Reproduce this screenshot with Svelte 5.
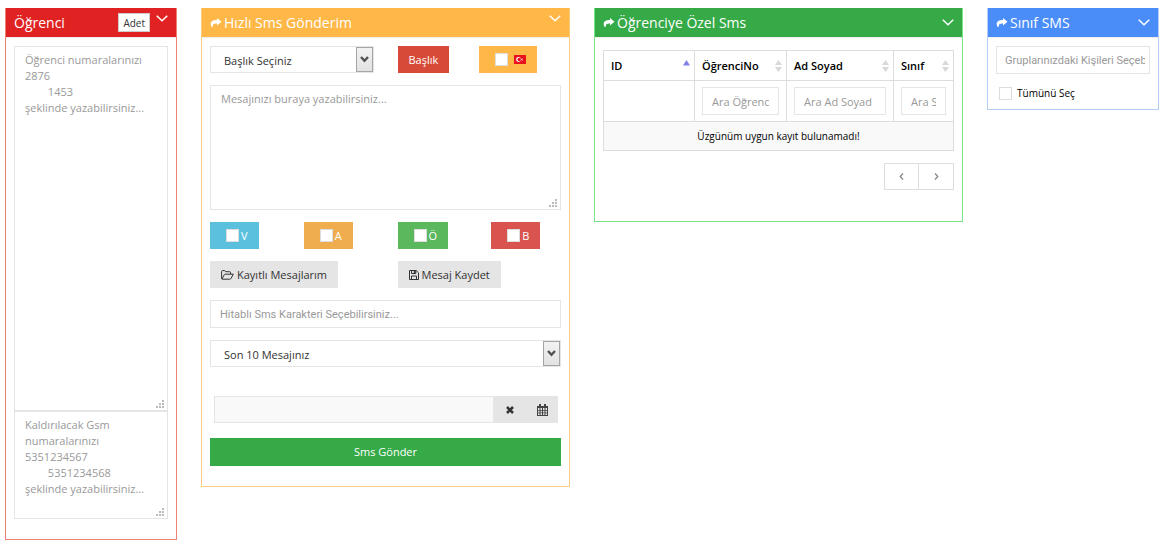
<script lang="ts">
    const flags = [
        { name: "V", color: "info" },
        { name: "A", color: "warning" },
        { name: "Ö", color: "success" },
        { name: "B", color: "danger" }
    ];

    const columns = [
        { title: "ID", search: "", width: 91 },
        { title: "ÖğrenciNo", search: "Ara ÖğrenciNo", width: 92 },
        { title: "Ad Soyad", search: "Ara Ad Soyad", width: 107 },
        { title: "Sınıf", search: "Ara Sınıf", width: 60 }
    ];
    const total = columns.reduce((sum, column) => sum + column.width, 0);

    const studentHint = "Öğrenci numaralarınızı\n2876\n        1453\nşeklinde yazabilirsiniz...";
    const removeHint = "Kaldırılacak Gsm numaralarınızı\n5351234567\n        5351234568\nşeklinde yazabilirsiniz...";
</script>

{#snippet share()}
    <svg class="share" width="12" height="11" viewBox="0 0 12 11" aria-hidden="true">
        <path d="M7 1 L11.500 4.800 L7 8.600 V6.500 C4 6.300 2.600 7 2.600 10 H1.600 C-.8 5.500 1.800 3.100 7 3.100 Z" fill="currentColor" />
    </svg>
{/snippet}

{#snippet toggle()}
    <button class="toggle" type="button" aria-label="Daralt">
        <svg width="12" height="7" viewBox="0 0 12 7" aria-hidden="true">
            <path d="M.7 .7 L6 5.800 L11.300 .7" fill="none" stroke="currentColor" stroke-width="1.500" />
        </svg>
    </button>
{/snippet}

{#snippet area(hint, label, size)}
    <div class="area {size}">
        <textarea placeholder={hint} aria-label={label}></textarea>
        <svg class="grip" width="8" height="8" viewBox="0 0 8 8" aria-hidden="true">
            <path d="M6 0h2v2h-2z M3 3h2v2h-2z M6 3h2v2h-2z M0 6h2v2h-2z M3 6h2v2h-2z M6 6h2v2h-2z" fill="#bbb" />
        </svg>
    </div>
{/snippet}

{#snippet dropdown(text)}
    <div class="dropdown">
        <select aria-label={text}>
            <option>{text}</option>
        </select>
        <span class="arrow">
            <svg width="9" height="7" viewBox="0 0 9 7" aria-hidden="true">
                <path d="M1 1 L4.500 4.700 L8 1" fill="none" stroke="#505050" stroke-width="2.400" />
            </svg>
        </span>
    </div>
{/snippet}

<main class="page">
    <section class="portlet red">
        <header class="top">
            <h2>Öğrenci</h2>
            <button class="count" type="button">Adet</button>
            {@render toggle()}
        </header>
        <div class="body">
            {@render area(studentHint, "Öğrenci numaraları", "tall")}
            {@render area(removeHint, "Kaldırılacak numaralar", "short")}
        </div>
    </section>

    <section class="portlet yellow">
        <header class="top">
            <h2>{@render share()}Hızlı Sms Gönderim</h2>
            {@render toggle()}
        </header>
        <form class="body">
            <div class="row">
                <div class="half">{@render dropdown("Başlık Seçiniz")}</div>
                <div class="half pair">
                    <button class="btn title" type="button">Başlık</button>
                    <label class="btn turkish">
                        <input type="checkbox" aria-label="Türkçe karakter" />
                        <svg width="12" height="9" viewBox="0 0 12 9" aria-hidden="true">
                            <rect width="12" height="9" fill="#e8101c" />
                            <circle cx="4.500" cy="4.500" r="2.400" fill="#fff" />
                            <circle cx="5.200" cy="4.500" r="1.700" fill="#e8101c" />
                            <path d="M6.500 4.500 L9 3.300 L8.200 4.500 L9 5.700 Z" fill="#fff" />
                        </svg>
                    </label>
                </div>
            </div>
            <div class="row single">
                {@render area("Mesajınızı buraya yazabilirsiniz...", "Mesaj", "message")}
            </div>
            <div class="row">
                {#each flags as flag}
                    <label class="btn {flag.color}"><input type="checkbox" />{flag.name}</label>
                {/each}
            </div>
            <div class="row">
                <div class="half">
                    <button class="btn" type="button">
                        <svg class="folder" width="13" height="10" viewBox="0 0 13 10" aria-hidden="true">
                            <path d="M.6 8.500 V1.500 Q.6 .6 1.500 .6 H3.600 Q4.300 .6 4.500 1.700 H8.600 Q9.600 1.700 9.600 2.700 V4.200 M.9 9 L3.300 4.700 Q3.600 4.200 4.200 4.200 H12.300 L10 8.500 Q9.600 9.200 8.800 9.200 H1.200 Q.6 9.200 .6 8.500" fill="none" stroke="#333" />
                        </svg>
                        Kayıtlı Mesajlarım
                    </button>
                </div>
                <div class="half">
                    <button class="btn" type="button">
                        <svg class="floppy" width="10" height="10" viewBox="0 0 10 10" aria-hidden="true">
                            <path d="M.5 .5 H7.200 L9.500 2.800 V9.500 H.5 Z M2.500 9.500 V6 H7.500 V9.500 M2.500 .5 V3.500 H6.800 V.5" fill="none" stroke="#333" />
                            <path d="M4.800 1h1.500v2h-1.500z" fill="#333" />
                        </svg>
                        Mesaj Kaydet
                    </button>
                </div>
            </div>
            <div class="row single">
                <input class="field plain" type="text" placeholder="Hitablı Sms Karakteri Seçebilirsiniz..." aria-label="Hitablı Sms Karakteri" />
            </div>
            <div class="row single">{@render dropdown("Son 10 Mesajınız")}</div>
            <div class="date">
                <input type="text" readonly aria-label="Gönderim tarihi" />
                <button type="button" aria-label="Temizle">
                    <svg width="8" height="8" viewBox="0 0 8 8" aria-hidden="true">
                        <path d="M1 1 L7 7 M7 1 L1 7" stroke="#333" stroke-width="2.600" />
                    </svg>
                </button>
                <button type="button" aria-label="Takvim">
                    <svg width="11" height="12" viewBox="0 0 11 12" aria-hidden="true">
                        <path d="M0 2h11v10h-11z M2 0h2v3h-2z M7 0h2v3h-2z" fill="#444" />
                        <path d="M1 4h1.500v2h-1.500z M3.500 4h1.500v2h-1.500z M6 4h1.500v2h-1.500z M8.500 4h1.500v2h-1.500z M1 6.700h1.500v1.800h-1.500z M3.500 6.700h1.500v1.800h-1.500z M6 6.700h1.500v1.800h-1.500z M8.500 6.700h1.500v1.800h-1.500z M1 9.200h1.500v1.800h-1.500z M3.500 9.200h1.500v1.800h-1.500z M6 9.200h1.500v1.800h-1.500z M8.500 9.200h1.500v1.800h-1.500z" fill="#e5e5e5" />
                    </svg>
                </button>
            </div>
            <button class="send" type="button">Sms Gönder</button>
        </form>
    </section>

    <section class="portlet green">
        <header>
            <h2>{@render share()}Öğrenciye Özel Sms</h2>
            {@render toggle()}
        </header>
        <div class="body">
            <table>
                <colgroup>
                    {#each columns as column}
                        <col style="width: {column.width / total * 100}%" />
                    {/each}
                </colgroup>
                <thead>
                    <tr>
                        {#each columns as column, i}
                            <th>
                                <div class="heading">
                                    {column.title}
                                    <svg width="7" height="12" viewBox="0 0 7 12" aria-hidden="true">
                                        {#if i === 0}
                                            <path d="M0 5.500 L3.500 0 L7 5.500 Z" fill="#8080e6" />
                                        {:else}
                                            <path d="M0 5 L3.500 0 L7 5 Z M0 7 L3.500 12 L7 7 Z" fill="#d8d8d8" />
                                        {/if}
                                    </svg>
                                </div>
                            </th>
                        {/each}
                    </tr>
                    <tr>
                        {#each columns as column}
                            <td>
                                {#if column.search}
                                    <input class="field" type="text" placeholder={column.search} aria-label={column.search} />
                                {/if}
                            </td>
                        {/each}
                    </tr>
                </thead>
                <tbody>
                    <tr><td class="empty" colspan="4">Üzgünüm uygun kayıt bulunamadı!</td></tr>
                </tbody>
            </table>
            <nav class="pages" aria-label="Sayfalar">
                <button type="button" aria-label="Önceki">
                    <svg width="5" height="7" viewBox="0 0 5 7" aria-hidden="true"><path d="M4 .5 L1.200 3.500 L4 6.500" fill="none" stroke="#888" stroke-width="1.300" /></svg>
                </button>
                <button type="button" aria-label="Sonraki">
                    <svg width="5" height="7" viewBox="0 0 5 7" aria-hidden="true"><path d="M1 .5 L3.800 3.500 L1 6.500" fill="none" stroke="#888" stroke-width="1.300" /></svg>
                </button>
            </nav>
        </div>
    </section>

    <section class="portlet blue">
        <header>
            <h2>{@render share()}Sınıf SMS</h2>
            {@render toggle()}
        </header>
        <div class="body">
            <input class="field plain" type="text" placeholder="Gruplarınızdaki Kişileri Seçebilirsiniz..." aria-label="Gruplarınızdaki Kişiler" />
            <label class="all"><input type="checkbox" />Tümünü Seç</label>
        </div>
    </section>
</main>

<style>
    :global(body) {
        margin: 0;
        background: #fff;
    }

    .page {
        display: grid;
        grid-template-columns: 172fr 369fr 369fr 172fr;
        align-items: start;
        gap: 24px;
        padding: 8px 11px 8px 5px;
        font: 11px/16px "Open Sans", sans-serif;
        color: #333;
    }

    .page * { box-sizing: border-box; }

    button, input, select, textarea {
        margin: 0;
        font: inherit;
        color: inherit;
        border-radius: 0;
    }

    ::placeholder {
        color: #999;
        opacity: 1;
    }

    .portlet {
        min-width: 0;
        border: 1px solid var(--line);
        border-top: 0;

        & header { background: var(--main); }
        &.red { --main: #e02222; --line: #ef8476; }
        &.yellow { --main: #ffb848; --line: #fccb7e; }
        &.green { --main: #35aa47; --line: #77e588; }
        &.blue { --main: #4b8df8; --line: #b4cef8; }
    }

    header {
        display: flex;
        align-items: center;
        gap: 6px;
        height: 30px;
        padding: 0 8px;
        border-bottom: 1px solid #eee;
        color: #fff;

        &.top .toggle {
            align-self: flex-start;
            margin-top: 7px;
        }
    }

    h2 {
        flex: 1;
        margin: 0;
        font-size: 14px;
        line-height: 20px;
        font-weight: 400;
        white-space: nowrap;
    }

    .share { margin-right: 2px; }

    .toggle {
        display: flex;
        padding: 0;
        border: 0;
        background: none;
    }

    .count {
        height: 19px;
        padding: 0 4px;
        border: 1px solid #ccc;
        background: #fff;
        font-size: 10px;
        line-height: 16px;
        color: #333;
    }

    .body { padding: 8px 8px 20px; }

    .area {
        position: relative;
        width: 100%;

        &.tall { height: 365px; }
        &.short { height: 108px; }
        &.message { height: 125px; }

        & textarea {
            display: block;
            width: 100%;
            height: 100%;
            padding: 5px 10px;
            border: 1px solid #e5e5e5;
            background: #fff;
            resize: none;
            overflow: hidden;
        }
    }

    .grip {
        position: absolute;
        right: 4px;
        bottom: 3px;
    }

    .row {
        display: grid;
        grid-template-columns: repeat(4, 1fr);
        column-gap: 24px;
        justify-items: start;
        margin-bottom: 12px;

        &.single { grid-template-columns: 1fr; }
    }

    .half {
        grid-column: span 2;
        width: 100%;
    }

    .pair {
        display: grid;
        grid-template-columns: 1fr 1fr;
        justify-items: start;
    }

    .btn {
        display: flex;
        align-items: center;
        height: 27px;
        padding: 0 11px;
        border: 0;
        background: #e5e5e5;
        white-space: nowrap;

        &.title { background: #d84a38; color: #fff; }
        &.turkish { background: #ffb848; gap: 6px; }
        &.info { background: #5bc0de; color: #fff; }
        &.warning { background: #f0ad4e; color: #fff; }
        &.success { background: #5cb85c; color: #fff; }
        &.danger { background: #d9534f; color: #fff; }

        & .folder, & .floppy { margin-right: 3px; }
    }

    input[type="checkbox"] {
        appearance: none;
        width: 13px;
        height: 13px;
        border: 1px solid #ddd;
        background: #fff;
    }

    .btn input[type="checkbox"] { margin: 0 2px 0 5px; }
    .turkish input[type="checkbox"] { margin-right: 0; }

    .dropdown {
        position: relative;
        width: 100%;

        & select {
            display: block;
            appearance: none;
            width: 100%;
            height: 27px;
            padding: 2px 22px 0 13px;
            border: 1px solid #e5e5e5;
            background: #fff;
        }
    }

    .arrow {
        position: absolute;
        top: 1px;
        right: 1px;
        bottom: 1px;
        display: flex;
        align-items: center;
        justify-content: center;
        width: 17px;
        border: 1px solid #a5a5a5;
        background: linear-gradient(#f2f2f2, #e2e2e2);
        pointer-events: none;
    }

    .field {
        display: block;
        width: 100%;
        height: 28px;
        padding: 0 9px;
        border: 1px solid #e5e5e5;
        background: #fff;
    }

    .plain { font-family: Roboto, "Liberation Sans", sans-serif; }
    .blue .field { padding: 0 4px 0 8px; }

    .date {
        display: flex;
        margin: 29px 3px 15px 4px;
        background: #e5e5e5;

        & input {
            flex: 1;
            min-width: 0;
            height: 27px;
            border: 1px solid #e5e5e5;
            background: #f9f9f9;
        }

        & button {
            display: flex;
            align-items: center;
            justify-content: center;
            width: 32px;
            padding: 0;
            border: 0;
            background: none;
        }
    }

    .send {
        display: block;
        width: 100%;
        height: 28px;
        border: 0;
        background: #35aa47;
        color: #fff;
    }

    table {
        width: 100%;
        margin-top: 4px;
        border-collapse: collapse;
        table-layout: fixed;
        color: #000;
    }

    th, td {
        padding: 6px 7px;
        border: 1px solid #ddd;
        text-align: left;
    }

    th {
        height: 30px;
        padding: 0 4px 0 7px;
        font-weight: 600;
    }

    .heading {
        display: flex;
        align-items: center;
        justify-content: space-between;
    }

    .empty {
        background: #f9f9f9;
        font-size: 10px;
        text-align: center;
    }

    .pages {
        display: flex;
        justify-content: flex-end;
        margin: 12px 0 11px;

        & button {
            display: flex;
            align-items: center;
            justify-content: center;
            width: 35px;
            height: 27px;
            padding: 0;
            border: 1px solid #ddd;
            background: #fff;
        }

        & button + button { border-left: 0; }
    }

    .all {
        display: flex;
        align-items: center;
        gap: 5px;
        margin: 12px 3px 0;
        font-size: 10px;
        line-height: 15px;
        color: #000;
    }

    .blue .body { padding-bottom: 8px; }
</style>
